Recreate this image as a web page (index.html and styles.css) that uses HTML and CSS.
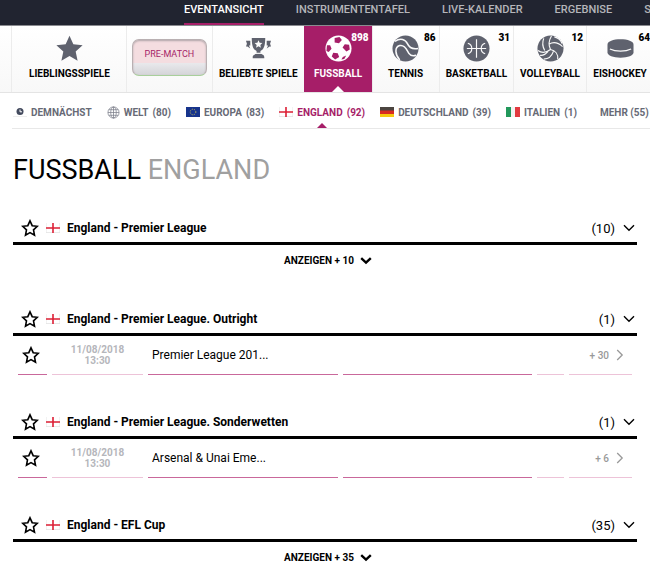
FILE: index.html
```html
<!DOCTYPE html>
<html lang="de">
<head>
    <meta charset="UTF-8">
    <meta name="viewport" content="width=device-width, initial-scale=1.0">
    <title>Fussball England</title>
    <link rel="stylesheet" href="styles.css">
</head>
<body>
    <!-- Shared icons -->
    <svg class="sprite" aria-hidden="true">
        <symbol id="star" viewBox="0 0 18 18">
            <path d="M9 1.800l2.200 4.900 5.100.6-3.800 3.600 1 5.300L9 13.600l-4.500 2.600 1-5.300-3.800-3.600 5.100-.6z" fill="none" stroke="currentColor" stroke-width="1.600"/>
        </symbol>
        <symbol id="flag-en" viewBox="0 0 14 10">
            <rect width="14" height="10" fill="#e4e4e4"/>
            <rect x=".5" width="13" height="9.200" fill="#fff"/>
            <path d="M7 0v10M0 5h14" stroke="#dc1f35" stroke-width="1.600"/>
        </symbol>
        <symbol id="down" viewBox="0 0 12 8">
            <path d="M1 1.200l5 5 5-5" fill="none" stroke="currentColor" stroke-width="1.400"/>
        </symbol>
        <symbol id="down-bold" viewBox="0 0 12 8">
            <path d="M1.200 1.200L6 5.600l4.800-4.400" fill="none" stroke="currentColor" stroke-width="2.400"/>
        </symbol>
        <symbol id="right" viewBox="0 0 8 12">
            <path d="M1.200 1l5 5-5 5" fill="none" stroke="currentColor" stroke-width="1.300"/>
        </symbol>
    </svg>

    <!-- Top navigation -->
    <nav class="topbar">
        <a href="#" class="active">EVENTANSICHT</a>
        <a href="#">INSTRUMENTENTAFEL</a>
        <a href="#">LIVE-KALENDER</a>
        <a href="#">ERGEBNISE</a>
        <a href="#">S</a>
    </nav>

    <!-- Sports -->
    <nav class="sports">
        <a href="#" class="sport favourites">
            <svg viewBox="0 0 28 28"><path d="M14 .8l4 8.800 9.600 1-7.200 6.500 2 9.600L14 21.800l-8.400 4.900 2-9.600L.4 10.600l9.600-1z"/></svg>
            <span>LIEBLINGSSPIELE</span>
        </a>
        <div class="sport toggle-cell">
            <button type="button" class="toggle">PRE-MATCH</button>
        </div>
        <a href="#" class="sport">
            <svg viewBox="0 0 28 28">
                <path d="M7 3h14c0 8-1.500 12-5 13.500V19c1 1.500 4 1 4 4v1H8v-1c0-3 3-2.500 4-4v-2.500C8.500 15 7 11 7 3z"/>
                <path d="M1 6h4.500v5H4l1.500 3-3-2H1l1-3zM27 6h-4.500v5H24l-1.500 3 3-2H27l-1-3z"/>
                <path class="cut" d="M14 5.500l1.200 2.600 2.800.3-2.100 1.900.6 2.800-2.500-1.400-2.500 1.400.6-2.800L10 8.400l2.800-.3z"/>
                <path class="cut-line" d="M10.500 19h7"/>
            </svg>
            <span>BELIEBTE SPIELE</span>
        </a>
        <a href="#" class="sport active">
            <svg viewBox="0 0 28 28">
                <circle cx="14" cy="14" r="13.500"/>
                <path class="cut" d="M10 3.200l5-1 2.500 3-3 3.300-4.500-.8zM20.500 9.500l4.500.5.700 5-3.500 2-4-4zM8.500 18.300l4.700.5 1.500 4-4.200 2.500-3.500-3zM2 10.500l3.300.2 1.500 3.500-3 3.300-2.300-1zM18.500 22.800l3.500-1.500-2 3.500-3 .7z"/>
            </svg>
            <span>FUSSBALL</span>
            <b class="count">898</b>
        </a>
        <a href="#" class="sport">
            <svg viewBox="0 0 28 28">
                <circle cx="14" cy="14" r="13.500"/>
                <path class="cut-line thick" d="M3 6.500C9 2.500 14 4.500 16 9s6 6 11 5M8 26C3 20 2.500 12.500 8 11s7.500 5 9.500 8 4.500 3 7.500 2"/>
            </svg>
            <span>TENNIS</span>
            <b class="count">86</b>
        </a>
        <a href="#" class="sport">
            <svg viewBox="0 0 28 28">
                <circle cx="14" cy="14" r="13.500"/>
                <path class="cut-line" d="M14 4.500v19M4 14h20M5 8.500c5.500 1.500 5.500 9.500 0 11M23 8.500c-5.500 1.500-5.500 9.500 0 11"/>
            </svg>
            <span>BASKETBALL</span>
            <b class="count">31</b>
        </a>
        <a href="#" class="sport">
            <svg viewBox="0 0 28 28">
                <circle cx="14" cy="14" r="13.500"/>
                <path class="cut-line" d="M14 15C12 11 12 6 15 1M14 15c-4 3-9 4-13 1M14 15c5 1 8 5 7.500 10M7 3.500c-2 5-1 9 1 12.500M12.500 9.500c5-3 9-2 14 2.500M18 2c4 1 7 4 8 7M7 25c4 0 8-2 10-8M3 21c3 .5 6-1 8.500-4"/>
            </svg>
            <span>VOLLEYBALL</span>
            <b class="count">12</b>
        </a>
        <a href="#" class="sport">
            <svg viewBox="0 0 28 28">
                <path d="M.5 10c0-3.500 6-5.500 13.500-5.500S27.500 6.500 27.500 10v8c0 3.500-6 5.500-13.500 5.500S.5 21.500.5 18z"/>
                <path class="cut-line" d="M3 14.500c6 3 16 3 22 0"/>
            </svg>
            <span>EISHOCKEY</span>
            <b class="count">64</b>
        </a>
    </nav>

    <!-- Regions -->
    <nav class="regions">
        <a href="#">
            <svg class="flag" viewBox="0 0 14 10"><rect y="9.500" width="14" height=".5" fill="#ddd"/><circle cx="7" cy="4.500" r="3.500" fill="#434a5e"/><path d="M7 2.500v2.300h2" stroke="#fff" fill="none"/></svg>
            <span>DEMNÄCHST</span>
        </a>
        <a href="#">
            <svg class="globe" viewBox="0 0 14 14"><circle cx="7" cy="7" r="6"/><ellipse cx="7" cy="7" rx="3" ry="6"/><path d="M7 1v12M1 7h12M2 4h10M2 10h10"/></svg>
            <span>WELT</span><span>(80)</span>
        </a>
        <a href="#">
            <svg class="flag" viewBox="0 0 14 10"><rect width="14" height="10" fill="#17348c"/><circle cx="7" cy="5" r="2.800" fill="none" stroke="#c2b95a" stroke-width="1" stroke-dasharray="1 1"/></svg>
            <span>EUROPA</span><span>(83)</span>
        </a>
        <a href="#" class="active">
            <svg class="flag"><use href="#flag-en"/></svg>
            <span>ENGLAND</span><span>(92)</span>
        </a>
        <a href="#">
            <svg class="flag" viewBox="0 0 14 10"><rect width="14" height="10" fill="#f7c90f"/><rect width="14" height="7" fill="#d82b20"/><rect width="14" height="3.500" fill="#4b4540"/></svg>
            <span>DEUTSCHLAND</span><span>(39)</span>
        </a>
        <a href="#">
            <svg class="flag" viewBox="0 0 14 10"><rect width="14" height="10" fill="#f3f3f3"/><rect width="5" height="10" fill="#22985b"/><rect x="9" width="5" height="10" fill="#e23a40"/></svg>
            <span>ITALIEN</span><span>(1)</span>
        </a>
        <a href="#" class="more">MEHR (55)</a>
    </nav>

    <main class="content">
        <h1>FUSSBALL <span>ENGLAND</span></h1>

        <section class="league">
            <header>
                <button type="button" class="fav" aria-label="Favorit"><svg><use href="#star"/></svg></button>
                <svg class="flag"><use href="#flag-en"/></svg>
                <h2>England - Premier League</h2>
                <span class="total">(10)</span>
                <svg class="arrow"><use href="#down"/></svg>
            </header>
            <button type="button" class="show-more">ANZEIGEN + 10 <svg class="arrow"><use href="#down-bold"/></svg></button>
        </section>

        <section class="league">
            <header>
                <button type="button" class="fav" aria-label="Favorit"><svg><use href="#star"/></svg></button>
                <svg class="flag"><use href="#flag-en"/></svg>
                <h2>England - Premier League. Outright</h2>
                <span class="total">(1)</span>
                <svg class="arrow"><use href="#down"/></svg>
            </header>
            <div class="event">
                <div><button type="button" class="fav" aria-label="Favorit"><svg><use href="#star"/></svg></button></div>
                <div class="date light">11/08/2018<br>13:30</div>
                <div class="name">Premier League 201...</div>
                <div></div>
                <div class="light"></div>
                <a href="#" class="markets light">+ 30 <svg><use href="#right"/></svg></a>
            </div>
        </section>

        <section class="league">
            <header>
                <button type="button" class="fav" aria-label="Favorit"><svg><use href="#star"/></svg></button>
                <svg class="flag"><use href="#flag-en"/></svg>
                <h2>England - Premier League. Sonderwetten</h2>
                <span class="total">(1)</span>
                <svg class="arrow"><use href="#down"/></svg>
            </header>
            <div class="event">
                <div><button type="button" class="fav" aria-label="Favorit"><svg><use href="#star"/></svg></button></div>
                <div class="date light">11/08/2018<br>13:30</div>
                <div class="name">Arsenal &amp; Unai Eme...</div>
                <div></div>
                <div class="light"></div>
                <a href="#" class="markets light">+ 6 <svg><use href="#right"/></svg></a>
            </div>
        </section>

        <section class="league">
            <header>
                <button type="button" class="fav" aria-label="Favorit"><svg><use href="#star"/></svg></button>
                <svg class="flag"><use href="#flag-en"/></svg>
                <h2>England - EFL Cup</h2>
                <span class="total">(35)</span>
                <svg class="arrow"><use href="#down"/></svg>
            </header>
            <button type="button" class="show-more">ANZEIGEN + 35 <svg class="arrow"><use href="#down-bold"/></svg></button>
        </section>
    </main>
</body>
</html>
```
FILE: styles.css
```css
* {
    box-sizing: border-box;
}
body {
    margin: 0;
    font-family: Roboto, "Liberation Sans", sans-serif;
    font-size: 13px;
    color: #000;
    background-color: #fff;
    overflow-x: hidden;
}
a {
    color: inherit;
    text-decoration: none;
}
button {
    padding: 0;
    border: none;
    background: none;
    color: inherit;
    font-family: inherit;
    cursor: pointer;
}
svg {
    display: block;
    flex-shrink: 0;
}
.sprite {
    display: none;
}

/* Top navigation */
.topbar {
    display: flex;
    gap: 32px;
    height: 26px;
    padding-left: 184px;
    background-color: #212430;
    border-bottom: 1px solid #8a8b90;
    overflow: hidden;
}
.topbar a {
    color: #b5b6ba;
    font-size: 11px;
    font-weight: 500;
    line-height: 19px;
    white-space: nowrap;
    border-bottom: 2px solid transparent;
}
.topbar a.active {
    color: #fff;
    border-bottom-color: #a61e68;
}

/* Sports */
.sports {
    display: flex;
    height: 67px;
    padding-left: 11px;
    background: linear-gradient(#fff, #f8f8f8);
    border-bottom: 1px solid #e4e4e4;
    overflow: hidden;
}
.sport {
    position: relative;
    display: flex;
    flex-direction: column;
    flex-shrink: 0;
    align-items: center;
    min-width: 67px;
    padding: 9px 6px 0;
    border-left: 1px solid #ececec;
    font-size: 10px;
    font-weight: 700;
    line-height: 14px;
    white-space: nowrap;
}
.sport svg {
    width: 27px;
    height: 27px;
    margin-bottom: 5px;
    fill: #5f626e;
}
.sport .cut {
    fill: #fafafa;
}
.sport .cut-line {
    fill: none;
    stroke: #fafafa;
    stroke-width: 1.2;
}
.sport .cut-line.thick {
    stroke-width: 1.6;
}
.sport .count {
    position: absolute;
    top: 5px;
    right: 3px;
}
.sport.active {
    min-width: 68px;
    border-left-color: #a61e68;
    background-color: #a61e68;
    color: #fff;
}
.sport.active svg {
    fill: #fff;
}
.sport.active .cut {
    fill: #a61e68;
}
.sport.active::after {
    content: "";
    position: absolute;
    bottom: 0;
    border: 6px solid transparent;
    border-top: none;
    border-bottom-color: #fff;
}
.sport.favourites {
    padding-left: 17px;
    padding-right: 16px;
}
.sport.toggle-cell {
    padding: 13px 5px 0;
}
.toggle {
    width: 75px;
    height: 37px;
    padding-bottom: 8px;
    border: 1px solid #b9b0b2;
    border-bottom-color: #a8cf9b;
    border-radius: 7px;
    background: linear-gradient(#e9e9ec, #d4d4d8) bottom / 100% 12px no-repeat #f4dde0;
    box-shadow: inset 0 1px 2px #b0a4a8;
    color: #a61e68;
    font-size: 9px;
}

/* Regions */
.regions {
    display: flex;
    gap: 15px;
    align-items: center;
    height: 36px;
    margin-left: 12px;
    padding: 3px 0 0 1px;
    border-bottom: 1px solid #e8e8e8;
    color: #676a76;
    font-size: 10px;
    font-weight: 700;
    white-space: nowrap;
    overflow: hidden;
}
.regions a {
    position: relative;
    display: flex;
    flex-shrink: 0;
    gap: 4px;
    align-items: center;
    height: 32px;
}
.regions .active {
    color: #a61e68;
}
.regions .active::after {
    content: "";
    position: absolute;
    bottom: 0;
    left: 50%;
    margin-left: -5px;
    border: 5px solid transparent;
    border-top: none;
    border-bottom-color: #a61e68;
}
.regions .more {
    margin-left: 8px;
}
.flag {
    width: 14px;
    height: 10px;
}
.globe {
    width: 13px;
    height: 13px;
    fill: none;
    stroke: #7b7e89;
    stroke-width: 0.8;
}

/* Leagues */
.content {
    padding: 23px 13px 0;
}
h1 {
    margin: 0 0 27px;
    font-size: 27px;
    font-weight: 400;
    line-height: 36px;
}
h1 span {
    color: #a0a0a0;
}
.league {
    margin-bottom: 34px;
}
.league:last-child {
    margin-bottom: 0;
}
.league header {
    display: flex;
    align-items: center;
    height: 30px;
    padding: 0 2px 1px 8px;
    border-bottom: 3px solid #000;
}
.league h2 {
    flex: 1;
    margin: 0 0 0 7px;
    font-size: 12px;
    font-weight: 700;
}
.league header .flag {
    margin-left: 7px;
}
.fav svg {
    width: 18px;
    height: 18px;
}
.total {
    margin-right: 8px;
}
.arrow {
    width: 12px;
    height: 8px;
}
.show-more {
    display: flex;
    gap: 6px;
    align-items: center;
    margin: 0 auto;
    padding: 8px 0 3px 6px;
    font-size: 10px;
    font-weight: 700;
    line-height: 16px;
}
.event {
    display: grid;
    grid-template-columns: 29px 91px 1fr 1fr 27px 63px;
    gap: 5px;
    height: 39px;
    padding: 0 5px;
}
.event > * {
    display: flex;
    align-items: center;
    border-bottom: 1px solid #c9689b;
}
.event .fav {
    margin-left: 4px;
}
.event .light {
    border-bottom-color: #edc3d8;
}
.event .date {
    justify-content: center;
    color: #b5b6bb;
    font-size: 10px;
    font-weight: 700;
    line-height: 11px;
    text-align: center;
}
.event .name {
    padding-left: 4px;
    font-size: 12px;
}
.event .markets {
    gap: 7px;
    justify-content: flex-end;
    padding-right: 8px;
    color: #999;
    font-size: 10px;
    font-weight: 500;
}
.markets svg {
    width: 8px;
    height: 12px;
}
```
